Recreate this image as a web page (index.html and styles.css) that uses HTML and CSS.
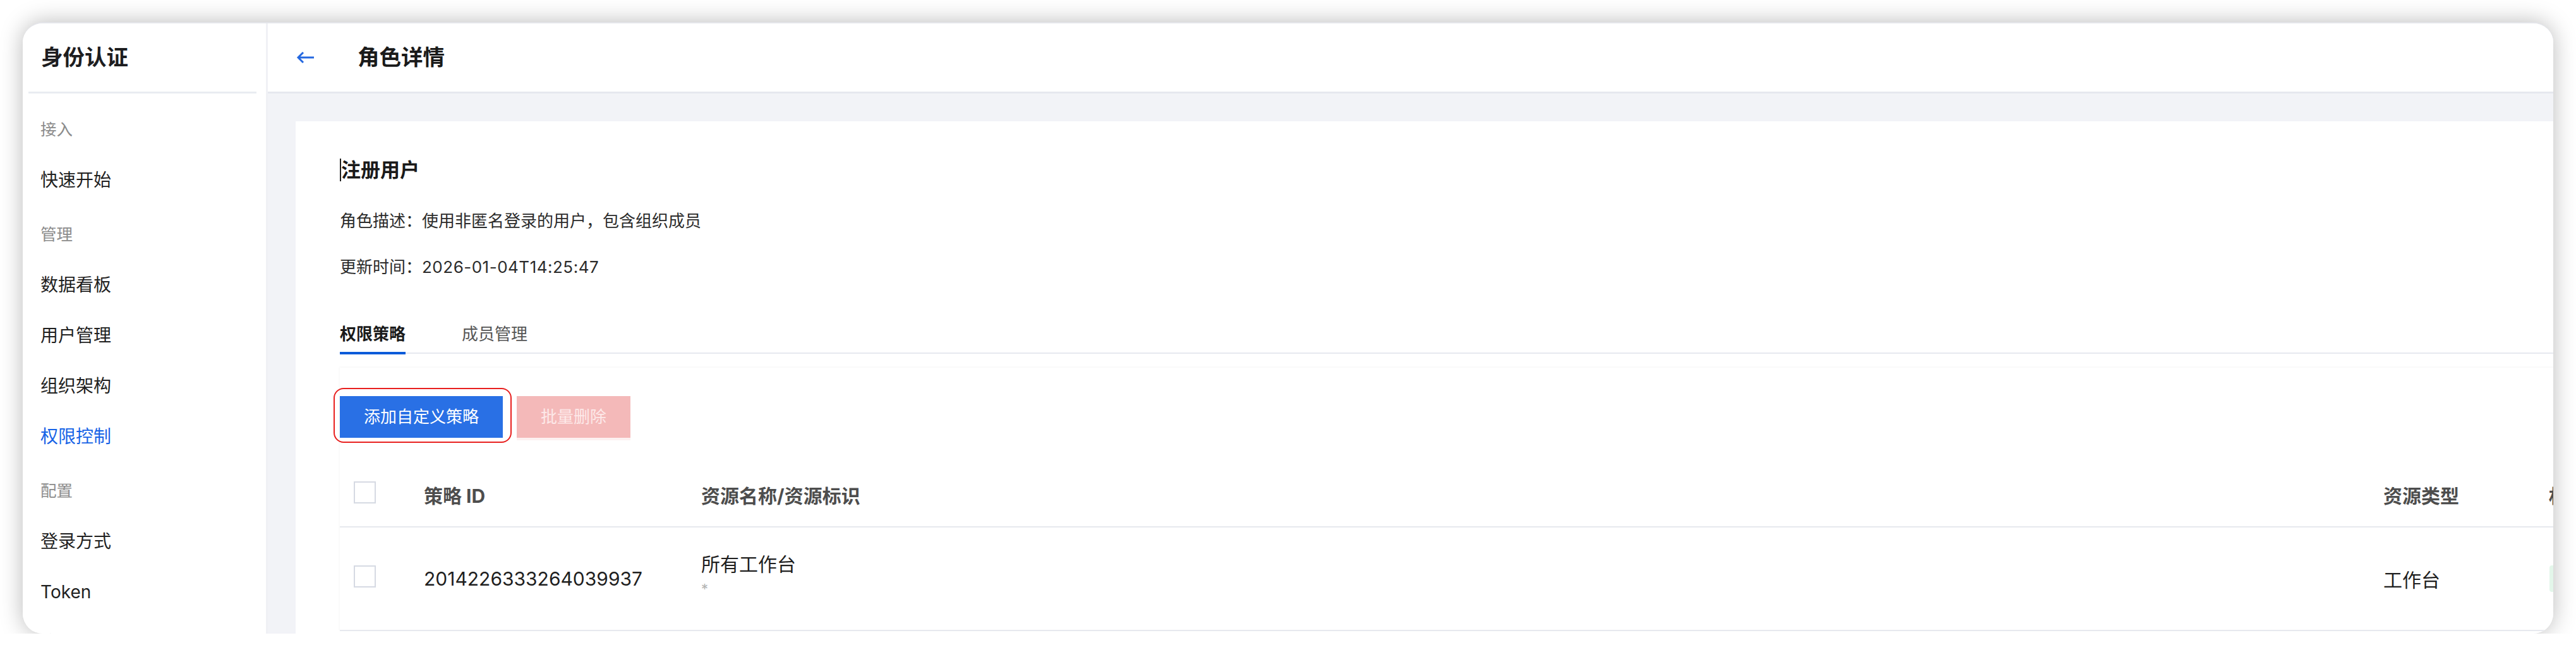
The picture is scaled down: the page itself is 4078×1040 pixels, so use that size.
FILE: index.html
```html
<!DOCTYPE html>
<html lang="zh-CN">
<head>
<meta charset="utf-8">
<title>角色详情</title>
<link rel="stylesheet" href="styles.css">
</head>
<body>
<div class="window">
  <aside class="sidebar">
    <div class="side-head"><h1 class="side-title">身份认证</h1></div>
    <nav class="nav">
      <div class="group">
        <div class="label">接入</div>
        <a class="item">快速开始</a>
      </div>
      <div class="group">
        <div class="label">管理</div>
        <a class="item">数据看板</a>
        <a class="item">用户管理</a>
        <a class="item">组织架构</a>
        <a class="item active">权限控制</a>
      </div>
      <div class="group">
        <div class="label">配置</div>
        <a class="item">登录方式</a>
        <a class="item">Token</a>
        <a class="item">登录页</a>
      </div>
    </nav>
  </aside>
  <main class="main">
    <header class="topbar">
      <svg class="back" viewBox="0 0 30 22" width="30" height="22"><path d="M28 11H3M11 3L3 11l8 8" fill="none" stroke="currentColor" stroke-width="3"/></svg>
      <h2 class="page-title">角色详情</h2>
    </header>
    <div class="content">
      <section class="card">
        <h3 class="role-name"><span class="caret"></span>注册用户</h3>
        <p class="meta desc">角色描述：使用非匿名登录的用户，包含组织成员</p>
        <p class="meta time">更新时间：<span class="num">2026-01-04T14:25:47</span></p>
        <div class="tabs">
          <span class="tab active">权限策略</span>
          <span class="tab">成员管理</span>
        </div>
        <div class="table-wrap">
          <div class="toolbar">
            <button class="btn primary highlighted">添加自定义策略</button>
            <button class="btn danger" disabled>批量删除</button>
          </div>
          <div class="table">
            <div class="tr th">
              <div class="c-check"><span class="checkbox"></span></div>
              <div>策略 ID</div>
              <div>资源名称/资源标识</div>
              <div>资源类型</div>
              <div>权限</div>
            </div>
            <div class="tr td">
              <div class="c-check"><span class="checkbox"></span></div>
              <div class="id">2014226333264039937</div>
              <div class="res">
                <div class="res-name">所有工作台</div>
                <div class="res-key">*</div>
              </div>
              <div>工作台</div>
              <div><span class="tag">读写</span></div>
            </div>
          </div>
        </div>
      </section>
    </div>
  </main>
</div>
</body>
</html>
```
FILE: styles.css
```css
* { box-sizing: border-box; margin: 0; padding: 0; }
html, body { background: #fff; }
body {
  font-family: Inter, "Noto Sans CJK SC", sans-serif;
  color: #1f1f1f;
  overflow: hidden;
}
.window {
  margin: 35px 0 0 36px;
  width: 4006px;
  height: 968px;
  border-top: 2px solid #e4e5ea;
  border-radius: 32px;
  overflow: hidden;
  background: #fff;
  box-shadow: 0 0 36px rgba(0, 0, 0, 0.28);
  display: flex;
}

/* Sidebar */
.sidebar {
  width: 388px;
  flex: none;
  border-right: 3px solid #f0f1f5;
  background: #fff;
  overflow: hidden;
}
.side-head {
  height: 111px;
  margin: 0 15px 0 9px;
  padding-left: 20px;
  border-bottom: 3px solid #e9ecf1;
  display: flex;
  align-items: center;
}
.side-title {
  font-size: 34.5px;
  font-weight: 700;
  color: #1d1d1f;
  line-height: 1;
}
.nav { padding-top: 17px; }
.group + .group { margin-top: 6px; }
.label {
  height: 80px;
  line-height: 80px;
  font-size: 25.5px;
  color: #8c8c8c;
  padding-left: 28px;
}
.item {
  display: block;
  height: 80px;
  line-height: 80px;
  font-size: 28px;
  color: #1f1f1f;
  padding-left: 28px;
  text-decoration: none;
}
.item.active { color: #1763e6; }

/* Main */
.main {
  flex: 1;
  min-width: 0;
  background: #f2f3f7;
  display: flex;
  flex-direction: column;
  overflow: hidden;
}
.topbar {
  height: 111px;
  flex: none;
  background: #fff;
  border-bottom: 3px solid #e6e8ee;
  display: flex;
  align-items: center;
  padding-left: 45px;
}
.back { color: #2468e0; margin-right: 67px; flex: none; }
.page-title {
  font-size: 34.5px;
  font-weight: 700;
  color: #1a1a1a;
  line-height: 1;
}
.content {
  flex: 1;
  padding: 44px 0 0 44px;
}
.card {
  width: 3800px;
  height: 100%;
  background: #fff;
  padding: 57px 0 0 70px;
}
.role-name {
  font-size: 31px;
  font-weight: 700;
  line-height: 40px;
  color: #1a1a1a;
  display: flex;
  align-items: center;
}
.caret {
  width: 2px;
  height: 36px;
  background: #222;
}
.meta {
  font-size: 26px;
  line-height: 40px;
  color: #2b2b2b;
}
.meta.desc { margin-top: 41px; }
.meta.time { margin-top: 33px; }
.num { letter-spacing: 0.5px; }

.tabs {
  margin-top: 66px;
  display: flex;
  gap: 89px;
  border-bottom: 2px solid #e6e9ef;
}
.tab {
  position: relative;
  font-size: 26px;
  line-height: 40px;
  padding-bottom: 9px;
  color: #555;
}
.tab.active { font-weight: 700; color: #1a1a1a; }
.tab.active::after {
  content: "";
  position: absolute;
  left: 0;
  right: 0;
  bottom: -3px;
  height: 4px;
  background: #0b5bd9;
}

.table-wrap {
  margin-top: 22px;
  box-shadow: -1px -1px 3px rgba(0, 0, 0, 0.04);
}
.toolbar {
  padding-top: 45px;
  display: flex;
  gap: 22px;
}
.btn {
  height: 66px;
  padding: 0 38px;
  border: none;
  border-radius: 0;
  font-family: inherit;
  font-size: 26px;
  line-height: 66px;
}
.btn.primary { background: #2970e5; color: #fff; }
.btn.danger {
  background: #f4b9b9;
  color: #fde9e9;
  box-shadow: 0 4px 0 #fdf1f1;
}
.highlighted { position: relative; }
.highlighted::after {
  content: "";
  position: absolute;
  top: -13px;
  left: -10px;
  right: -14px;
  bottom: -8px;
  border: 2px solid #e8201f;
  border-radius: 16px;
}

.table { margin-top: 40px; }
.tr {
  display: grid;
  grid-template-columns: 133px 439px 2663px 262px 1fr;
  align-items: center;
  border-bottom: 2px solid #e7e9ee;
}
.th {
  height: 102px;
  font-size: 30px;
  font-weight: 700;
  color: #4d4d4d;
}
.td {
  height: 164px;
  font-size: 30px;
  color: #1f1f1f;
}
.c-check { padding-left: 22px; display: flex; }
.checkbox {
  width: 35px;
  height: 35px;
  border: 2px solid #d6dae3;
  margin-bottom: 8px;
}
.res { align-self: start; padding-top: 38px; }
.res-name { line-height: 40px; }
.res-key {
  font-size: 22px;
  line-height: 24px;
  margin-top: 7px;
  color: #b3b3b3;
}
.tag {
  display: inline-block;
  margin-left: 1px;
  background: #e3f6ea;
  color: #2ba471;
  font-size: 24px;
  line-height: 42px;
  padding: 0 14px;
  border-radius: 4px;
}
```
